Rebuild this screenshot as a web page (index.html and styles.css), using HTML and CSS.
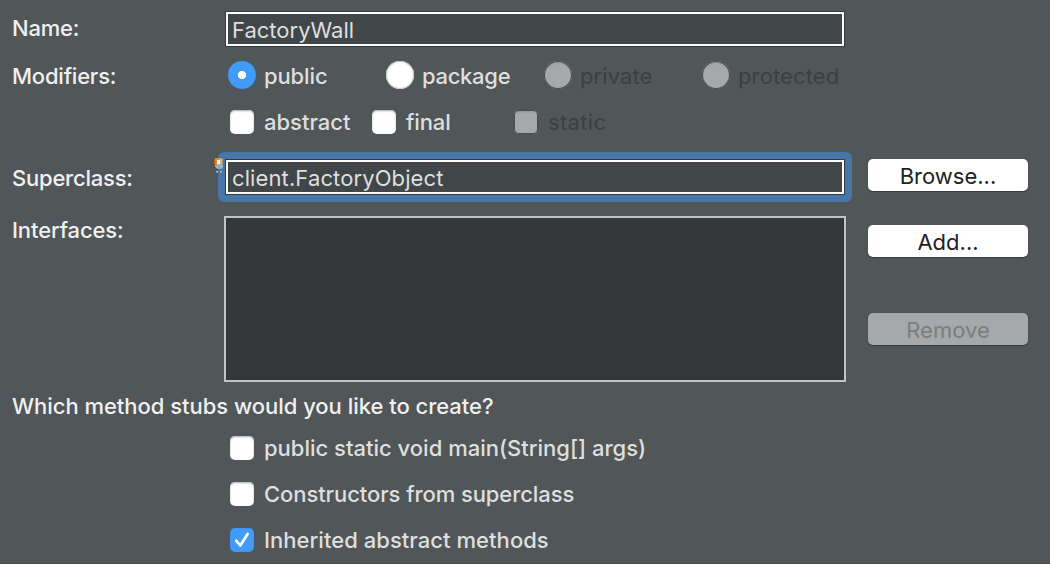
FILE: index.html
```html
<!DOCTYPE html>
<html lang="en">
<head>
<meta charset="utf-8">
<title>New Java Class</title>
<link rel="stylesheet" href="styles.css">
</head>
<body>
<main class="form">
  <div class="row row-name">
    <span class="label"><span class="t t-name">Name:</span></span>
    <div class="field"><span class="t t-factorywall">FactoryWall</span></div>
  </div>
  <div class="row row-access">
    <span class="label"><span class="t t-modifiers">Modifiers:</span></span>
    <div class="options access">
      <label class="option"><i class="radio on"></i><span class="t t-public">public</span></label>
      <label class="option"><i class="radio"></i><span class="t t-package">package</span></label>
      <label class="option off"><i class="radio"></i><span class="t t-private">private</span></label>
      <label class="option off"><i class="radio"></i><span class="t t-protected">protected</span></label>
    </div>
  </div>
  <div class="row row-flags">
    <span class="label"></span>
    <div class="options flags">
      <label class="option"><i class="check"></i><span class="t t-abstract">abstract</span></label>
      <label class="option"><i class="check"></i><span class="t t-final">final</span></label>
      <label class="option off"><i class="check"></i><span class="t t-static">static</span></label>
    </div>
  </div>
  <div class="row row-super">
    <span class="label"><span class="t t-superclass">Superclass:</span></span>
    <div class="field focus">
      <span class="t t-client">client.FactoryObject</span>
      <svg class="bulb" width="12" height="18" viewBox="0 0 12 18"><path d="M2 .5h8v8L8.500 11H4.500L2 8.500z" fill="#a5bdd1"/><path d="M2 0h4v2H4v6H2z" fill="#ef8620"/><path d="M1 1h1.500v5H1z" fill="#c9651a"/><path d="M9 1h1v6H8V6h1z" fill="#d58a4c"/><path d="M4 2h3v4H4z" fill="#fff4dc"/><path d="M4.500 7h3v4h-3z" fill="#7eabd0"/><path d="M3 13h2v1.500H3zM7 13h2v1.500H7z" fill="#a9c3db"/></svg>
    </div>
    <button class="button"><span class="t t-browse">Browse...</span></button>
  </div>
  <div class="row row-interfaces">
    <span class="label"><span class="t t-interfaces">Interfaces:</span></span>
    <div class="list"></div>
    <div class="buttons">
      <button class="button"><span class="t t-add">Add...</span></button>
      <button class="button disabled" disabled><span class="t t-remove">Remove</span></button>
    </div>
  </div>
  <div class="row row-question"><span class="t t-question">Which method stubs would you like to create?</span></div>
  <div class="stubs">
    <label class="option"><i class="check"></i><span class="t t-main">public static void main(String[] args)</span></label>
    <label class="option"><i class="check"></i><span class="t t-constructors">Constructors from superclass</span></label>
    <label class="option"><i class="check on"><svg width="24" height="24" viewBox="0 0 24 24"><path d="M6.300 12.800l4 4.700 7.300-11.500" fill="none" stroke="#fff" stroke-width="2.700" stroke-linecap="round" stroke-linejoin="round"/></svg></i><span class="t t-inherited">Inherited abstract methods</span></label>
  </div>
</main>
</body>
</html>
```

FILE: styles.css
```css
* { box-sizing: border-box; }
body { margin: 0; background: #515658; font: 22px/28px Inter, "Liberation Sans", sans-serif; color: #dedfdf; }
.form { width: 1050px; height: 564px; overflow: hidden; border-bottom: 1px solid #484d4f; }
.row { display: flex; align-items: flex-start; padding-left: 12px; }
.label { width: 212px; flex: none; color: #f0f0f0; font-weight: 500; }
.t { display: inline-block; white-space: nowrap; }
.row-name { height: 56px; padding-top: 11px; }
.row-name .label { padding-top: 3px; }
.row-access { height: 40px; padding-top: 6px; }
.row-flags { height: 52px; padding-top: 12px; }
.row-super { height: 60px; padding-top: 11px; }
.row-super .label { padding-top: 5px; }
.row-interfaces { height: 180px; padding-top: 8px; }
.row-question { height: 37px; padding-top: 4px; color: #f0f0f0; font-weight: 500; }

/* Tracking per string */
.t-name, .t-modifiers, .t-superclass { letter-spacing: -0.22px; }
.t-interfaces, .t-public, .t-final { letter-spacing: -0.12px; }
.t-package { letter-spacing: -0.3px; }
.t-protected { letter-spacing: 0.12px; }
.t-private { letter-spacing: 0.08px; }
.t-static { letter-spacing: 0.35px; }
.t-client { letter-spacing: 0.11px; }
.t-question { letter-spacing: -0.03px; }
.t-constructors { letter-spacing: -0.08px; }
.t-inherited { letter-spacing: 0.04px; }

.field { position: relative; width: 618px; height: 34px; margin: 1px 2px 0; padding: 2px 0 0 4px; border: 2px solid #fcfcf8; background: #414649; box-shadow: 0 0 0 1px #383c3e; }
.focus { box-shadow: 0 0 0 1px #303b45; }
.focus::before { content: ""; position: absolute; z-index: -1; inset: -10px; border-radius: 6px; background: #4776a7; }
.bulb { position: absolute; left: -15px; top: -4px; }
.list { width: 622px; height: 166px; border: 2px solid #c3c3c3; background: #35383b; }

.options { display: grid; padding-left: 4px; }
.access { grid-template-columns: repeat(4, 158px); }
.flags { grid-template-columns: 142px 142px 160px; }
.option { display: flex; height: 28px; font-weight: 500; }
.radio { width: 28px; height: 28px; margin: -1px 8px 0 0; border-radius: 50%; background: #fff; box-shadow: inset 0 0 1px 1px #c4c6c7; flex: none; }
.radio.on { background: radial-gradient(circle, #fff 3.700px, #419bf9 4.500px); box-shadow: inset 0 0 1px #2f7fd8; }
.check { width: 24px; height: 24px; margin: 2px 10px 0 2px; border-radius: 5px; background: #fff; box-shadow: inset 0 1px 2px #a9acad; flex: none; }
.check.on { background: #419bf9; box-shadow: inset 0 0 1px #2f7fd8; }
.check svg { display: block; }
.off { color: #3c4042; font-weight: 400; }
.off .radio, .off .check { background: #a5a9aa; box-shadow: inset 0 0 0 1px #484c4e, inset 0 2px 2px #929697; }
.stubs { display: flex; flex-direction: column; gap: 18px; padding: 9px 0 0 228px; }

.button { display: block; width: 160px; height: 32px; margin-left: 22px; padding: 2px 0 0; border: 0; border-radius: 5px; background: #fff; color: #222; font: inherit; text-align: center; box-shadow: 0 1px 1px #383c3e; }
.buttons { display: flex; flex-direction: column; gap: 56px; padding-top: 9px; }
.disabled { background: #a6a8a9; color: #7b7e80; }
```
